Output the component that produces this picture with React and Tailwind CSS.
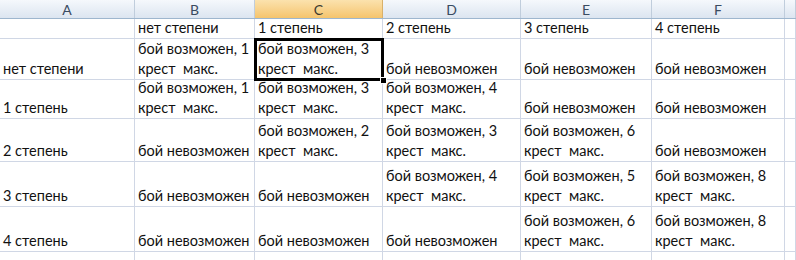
import React from 'react';

const cols = [
  { name: 'A', w: 135 },
  { name: 'B', w: 120 },
  { name: 'C', w: 128, active: true },
  { name: 'D', w: 138 },
  { name: 'E', w: 131 },
  { name: 'F', w: 133 },
  { name: '', w: 11 },
];

const rowHeights = [20, 41, 39, 43, 45, 45, 10];

const n = 'бой невозможен';
const pos = (k) => [`бой возможен, ${k}`, 'крест  макс.'];

const rows = [
  ['', 'нет степени', '1 степень', '2 степень', '3 степень', '4 степень', ''],
  ['нет степени', pos(1), pos(3), n, n, n, ''],
  ['1 степень', pos(1), pos(3), pos(4), n, n, ''],
  ['2 степень', n, pos(2), pos(3), pos(6), n, ''],
  ['3 степень', n, n, pos(4), pos(5), pos(8), ''],
  ['4 степень', n, n, n, pos(6), pos(8), ''],
  ['', '', '', '', '', '', ''],
];

const Cell = ({ value, w, h }) => (
  <div
    className="flex flex-col justify-end border-r border-b border-[#d0d7e5] pl-[3px] overflow-hidden whitespace-pre text-[14.5px] leading-[20px] text-[#111]"
    style={{ width: w, height: h }}
  >
    {Array.isArray(value) ? value.map((l, i) => <span key={i}>{l}</span>) : <span>{value}</span>}
  </div>
);

export default function App() {
  return (
    <div className="relative w-[796px] h-[260px] overflow-hidden bg-white" style={{ fontFamily: 'Lato, "Open Sans", sans-serif' }}>
      <div className="flex h-[19px] border-b border-[#9eb6ce]">
        {cols.map((c, i) => (
          <div
            key={i}
            className={`flex items-center justify-center border-r text-[14px] ${
              c.active
                ? 'bg-gradient-to-b from-[#fbe2ad] to-[#f5c46c] border-[#d9b16a] text-[#3d3a30]'
                : 'bg-gradient-to-b from-[#f5f8fc] to-[#dce5f0] border-[#c0cddc] text-[#3a4b61]'
            }`}
            style={{ width: c.w }}
          >
            {c.name}
          </div>
        ))}
      </div>
      {rows.map((r, ri) => (
        <div key={ri} className="flex">
          {r.map((v, ci) => (
            <Cell key={ci} value={v} w={cols[ci].w} h={rowHeights[ri]} />
          ))}
        </div>
      ))}
      <div className="absolute left-[254px] top-[38px] w-[130px] h-[43px] border-[3px] border-black pointer-events-none" />
      <div className="absolute left-[380px] top-[77px] w-[7px] h-[7px] bg-black border border-white" />
    </div>
  );
}
